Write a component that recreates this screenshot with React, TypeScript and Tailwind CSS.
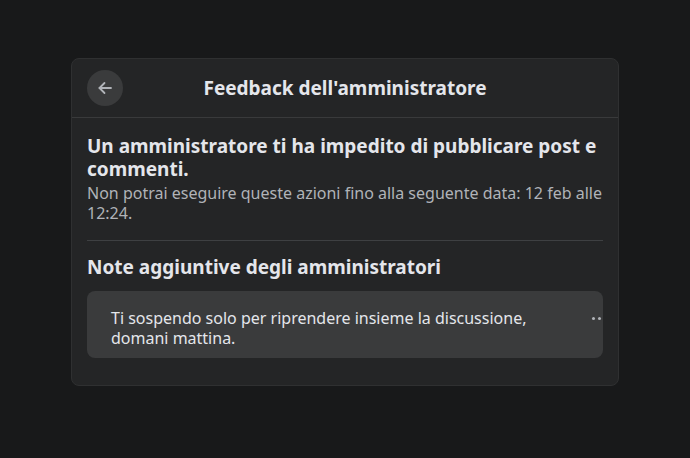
export default function App() {
  return (
    <div
      className="min-h-screen w-full bg-[#18191a] pt-[58px] pl-[71px]"
      style={{ fontFamily: '"Noto Sans", "Open Sans", sans-serif' }}
    >
      <div className="w-[548px] h-[328px] rounded-lg bg-[#242526] border border-[#2f3031] overflow-hidden">
        <div className="relative h-[59px] flex items-center justify-center border-b border-[#393a3b]">
          <button className="absolute left-[15px] top-[11px] w-9 h-9 rounded-full bg-[#3a3b3c] flex items-center justify-center">
            <svg width="20" height="20" viewBox="0 0 20 20" fill="none" stroke="#b0b3b8" strokeWidth="1.8" strokeLinecap="round" strokeLinejoin="round">
              <path d="M16 10H4.5" />
              <path d="M9.5 5L4.5 10l5 5" />
            </svg>
          </button>
          <h2 className="text-[19px] font-bold text-[#e4e6eb] leading-6">Feedback dell'amministratore</h2>
        </div>
        <div className="px-[15px] pt-[17px]">
          <h3 className="text-[19px] font-bold leading-[23px] text-[#e4e6eb]">
            Un amministratore ti ha impedito di pubblicare post e commenti.
          </h3>
          <p className="text-[16px] leading-5 text-[#b0b3b8] mt-[2px]">
            Non potrai eseguire queste azioni fino alla seguente data: 12 feb alle 12:24.
          </p>
          <div className="h-px bg-[#3e4042] mt-[17px]" />
          <h3 className="text-[19px] font-bold leading-[23px] text-[#e4e6eb] mt-[15px]">
            Note aggiuntive degli amministratori
          </h3>
          <div className="relative mt-[12px] h-[67px] rounded-lg bg-[#3a3b3c] overflow-hidden pl-6 pr-10 pt-[17px]">
            <p className="text-[16px] leading-5 text-[#e4e6eb]">
              Ti sospendo solo per riprendere insieme la discussione, domani mattina.
            </p>
            <div className="absolute right-[-4px] top-[26px] flex gap-[3px]">
              <span className="w-[3px] h-[3px] rounded-full bg-[#b0b3b8]" />
              <span className="w-[3px] h-[3px] rounded-full bg-[#b0b3b8]" />
              <span className="w-[3px] h-[3px] rounded-full bg-[#b0b3b8]" />
            </div>
          </div>
        </div>
      </div>
    </div>
  );
}
